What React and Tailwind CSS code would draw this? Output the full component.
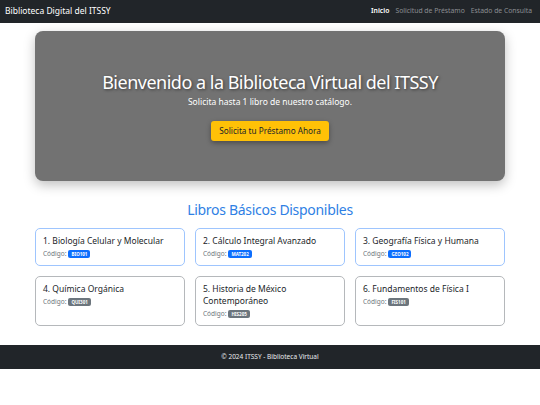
import React from "react";

const books = [
  { t: "1. Biología Celular y Molecular", c: "BIO101", p: true },
  { t: "2. Cálculo Integral Avanzado", c: "MAT202", p: true },
  { t: "3. Geografía Física y Humana", c: "GEO102", p: true },
  { t: "4. Química Orgánica", c: "QUI301", p: false },
  { t: "5. Historia de México Contemporáneo", c: "HIS205", p: false },
  { t: "6. Fundamentos de Física I", c: "FIS101", p: false },
];

export default function App() {
  return (
    <div className="min-h-[405px] bg-white font-['Noto_Sans',sans-serif]">
      <nav className="h-[23px] bg-[#212529] flex items-center justify-between pl-[5px] pr-[8px]">
        <span className="text-[8.5px] text-white">Biblioteca Digital del ITSSY</span>
        <div className="flex gap-[6px] text-[6.8px]">
          <span className="text-white font-semibold">Inicio</span>
          <span className="text-[#8c8f93]">Solicitud de Préstamo</span>
          <span className="text-[#8c8f93]">Estado de Consulta</span>
        </div>
      </nav>
      <main className="w-[470px] mx-auto pt-[8px] pb-[19px]">
        <section className="h-[150px] rounded-[8px] bg-[#727272] shadow-[0_4px_12px_rgba(0,0,0,0.25)] flex flex-col items-center justify-center">
          <h1 className="text-[18px] leading-[22px] tracking-[-0.5px] text-white [text-shadow:1px_1px_3px_rgba(0,0,0,0.5)]">
            Bienvenido a la Biblioteca Virtual del ITSSY
          </h1>
          <p className="text-[8.5px] leading-[12px] text-white mt-[3px]">
            Solicita hasta 1 libro de nuestro catálogo.
          </p>
          <button className="mt-[13px] h-[20px] px-[8px] rounded-[3px] bg-[#ffc107] text-[#212529] text-[8.2px] shadow-[0_2px_5px_rgba(0,0,0,0.35)]">
            Solicita tu Préstamo Ahora
          </button>
        </section>
        <h2 className="mt-[20px] text-center text-[14px] leading-[18px] tracking-[-0.3px] text-[#2f7fe4]">
          Libros Básicos Disponibles
        </h2>
        <div className="mt-[9px] grid grid-cols-3 gap-[10px]">
          {books.map((b) => (
            <div
              key={b.c}
              className={
                "rounded-[5px] border bg-white px-[7px] pt-[6px] pb-[7px] " +
                (b.p ? "border-[#9ec5fe]" : "border-[#b5b8bb]")
              }
            >
              <div className="text-[8.5px] leading-[12px] text-[#212529]">{b.t}</div>
              <div className="mt-[2px] h-[9px] flex items-center gap-[2px] text-[6.5px] text-[#6c757d]">
                <span>Código:</span>
                <span
                  className={
                    "rounded-[2px] px-[3px] py-[1px] text-[4.5px] leading-[6px] font-bold text-white " +
                    (b.p ? "bg-[#0d6efd]" : "bg-[#6c757d]")
                  }
                >
                  {b.c}
                </span>
              </div>
            </div>
          ))}
        </div>
      </main>
      <footer className="h-[24px] bg-[#212529] flex items-center justify-center">
        <span className="text-[6.5px] text-[#e9ecef]">© 2024 ITSSY - Biblioteca Virtual</span>
      </footer>
    </div>
  );
}
